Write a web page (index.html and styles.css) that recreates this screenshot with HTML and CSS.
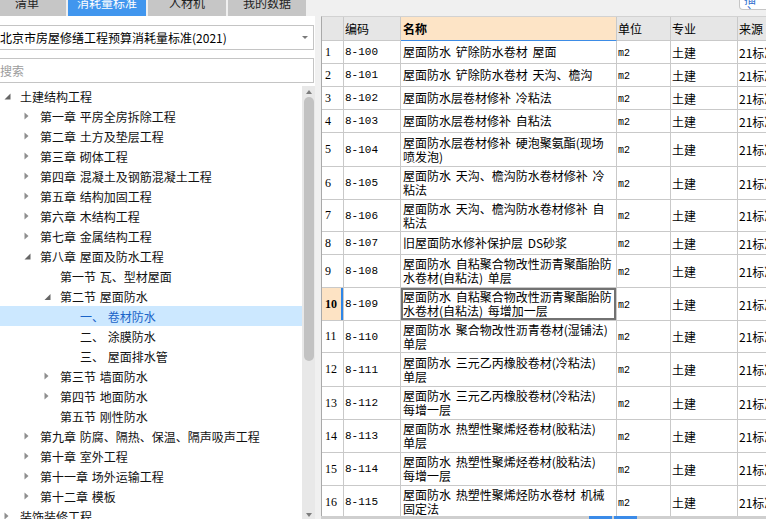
FILE: index.html
```html
<!DOCTYPE html>
<html lang="zh">
<head>
<meta charset="utf-8">
<title>消耗量标准</title>
<link rel="stylesheet" href="styles.css">
</head>
<body>
<div class="app">
  <aside class="left">
    <nav class="tabs">
      <div class="tab"><span>清单</span></div>
      <div class="tab active"><span>消耗量标准</span></div>
      <div class="tab"><span>人材机</span></div>
      <div class="tab"><span>我的数据</span></div>
    </nav>
    <div class="select"><span>北京市房屋修缮工程预算消耗量标准(2021)</span><i class="caret"></i></div>
    <div class="search">搜索</div>
    <div class="treewrap">
      <div class="tree">
        <div class="node l0"><svg class="tog" viewBox="0 0 20 20"><path d="M10.5 7.5 L10.5 13.5 L4.5 13.5 Z" fill="#666"/></svg>土建结构工程</div>
        <div class="node l1"><svg class="tog" viewBox="0 0 20 20"><path d="M4.5 6.5 L8.5 10 L4.5 13.5 Z" fill="#8e8e8e"/></svg>第一章 平房全房拆除工程</div>
        <div class="node l1"><svg class="tog" viewBox="0 0 20 20"><path d="M4.5 6.5 L8.5 10 L4.5 13.5 Z" fill="#8e8e8e"/></svg>第二章 土方及垫层工程</div>
        <div class="node l1"><svg class="tog" viewBox="0 0 20 20"><path d="M4.5 6.5 L8.5 10 L4.5 13.5 Z" fill="#8e8e8e"/></svg>第三章 砌体工程</div>
        <div class="node l1"><svg class="tog" viewBox="0 0 20 20"><path d="M4.5 6.5 L8.5 10 L4.5 13.5 Z" fill="#8e8e8e"/></svg>第四章 混凝土及钢筋混凝土工程</div>
        <div class="node l1"><svg class="tog" viewBox="0 0 20 20"><path d="M4.5 6.5 L8.5 10 L4.5 13.5 Z" fill="#8e8e8e"/></svg>第五章 结构加固工程</div>
        <div class="node l1"><svg class="tog" viewBox="0 0 20 20"><path d="M4.5 6.5 L8.5 10 L4.5 13.5 Z" fill="#8e8e8e"/></svg>第六章 木结构工程</div>
        <div class="node l1"><svg class="tog" viewBox="0 0 20 20"><path d="M4.5 6.5 L8.5 10 L4.5 13.5 Z" fill="#8e8e8e"/></svg>第七章 金属结构工程</div>
        <div class="node l1"><svg class="tog" viewBox="0 0 20 20"><path d="M10.5 7.5 L10.5 13.5 L4.5 13.5 Z" fill="#666"/></svg>第八章 屋面及防水工程</div>
        <div class="node l2"><span class="tog"></span>第一节 瓦、型材屋面</div>
        <div class="node l2"><svg class="tog" viewBox="0 0 20 20"><path d="M10.5 8 L10.5 14 L4.5 14 Z" fill="#666"/></svg>第二节 屋面防水</div>
        <div class="node l3 sel"><span class="tog"></span>一、 卷材防水</div>
        <div class="node l3"><span class="tog"></span>二、 涂膜防水</div>
        <div class="node l3"><span class="tog"></span>三、 屋面排水管</div>
        <div class="node l2"><svg class="tog" viewBox="0 0 20 20"><path d="M4.5 6.5 L8.5 10 L4.5 13.5 Z" fill="#8e8e8e"/></svg>第三节 墙面防水</div>
        <div class="node l2"><svg class="tog" viewBox="0 0 20 20"><path d="M4.5 6.5 L8.5 10 L4.5 13.5 Z" fill="#8e8e8e"/></svg>第四节 地面防水</div>
        <div class="node l2"><span class="tog"></span>第五节 刚性防水</div>
        <div class="node l1"><svg class="tog" viewBox="0 0 20 20"><path d="M4.5 6.5 L8.5 10 L4.5 13.5 Z" fill="#8e8e8e"/></svg>第九章 防腐、隔热、保温、隔声吸声工程</div>
        <div class="node l1"><svg class="tog" viewBox="0 0 20 20"><path d="M4.5 6.5 L8.5 10 L4.5 13.5 Z" fill="#8e8e8e"/></svg>第十章 室外工程</div>
        <div class="node l1"><svg class="tog" viewBox="0 0 20 20"><path d="M4.5 6.5 L8.5 10 L4.5 13.5 Z" fill="#8e8e8e"/></svg>第十一章 场外运输工程</div>
        <div class="node l1"><svg class="tog" viewBox="0 0 20 20"><path d="M4.5 6.5 L8.5 10 L4.5 13.5 Z" fill="#8e8e8e"/></svg>第十二章 模板</div>
        <div class="node l0"><svg class="tog" viewBox="0 0 20 20"><path d="M4.5 6.5 L8.5 10 L4.5 13.5 Z" fill="#8e8e8e"/></svg>装饰装修工程</div>
      </div>
      <div class="vscroll">
        <i class="arr-up"></i>
        <div class="thumb"></div>
        <div class="spacer"></div>
        <i class="arr-down"></i>
      </div>
    </div>
  </aside>
  <div class="splitter"></div>
  <main class="right">
    <div class="topbar"><div class="btn"><span>插入</span></div></div>
    <div class="grid">
      <div class="row head">
        <div class="c rn"></div>
        <div class="c">编码</div>
        <div class="c name-h">名称</div>
        <div class="c">单位</div>
        <div class="c">专业</div>
        <div class="c">来源</div>
      </div>
      <div class="row h23"><div class="c rn">1</div><div class="c code">8-100</div><div class="c nm">屋面防水 铲除防水卷材 屋面</div><div class="c unit">m2</div><div class="c mj">土建</div><div class="c src">21标准</div></div>
      <div class="row h23"><div class="c rn">2</div><div class="c code">8-101</div><div class="c nm">屋面防水 铲除防水卷材 天沟、檐沟</div><div class="c unit">m2</div><div class="c mj">土建</div><div class="c src">21标准</div></div>
      <div class="row h23"><div class="c rn">3</div><div class="c code">8-102</div><div class="c nm">屋面防水层卷材修补 冷粘法</div><div class="c unit">m2</div><div class="c mj">土建</div><div class="c src">21标准</div></div>
      <div class="row h23"><div class="c rn">4</div><div class="c code">8-103</div><div class="c nm">屋面防水层卷材修补 自粘法</div><div class="c unit">m2</div><div class="c mj">土建</div><div class="c src">21标准</div></div>
      <div class="row h34"><div class="c rn">5</div><div class="c code">8-104</div><div class="c nm">屋面防水层卷材修补 硬泡聚氨酯(现场<br>喷发泡)</div><div class="c unit">m2</div><div class="c mj">土建</div><div class="c src">21标准</div></div>
      <div class="row h33"><div class="c rn">6</div><div class="c code">8-105</div><div class="c nm">屋面防水 天沟、檐沟防水卷材修补 冷<br>粘法</div><div class="c unit">m2</div><div class="c mj">土建</div><div class="c src">21标准</div></div>
      <div class="row h32"><div class="c rn">7</div><div class="c code">8-106</div><div class="c nm">屋面防水 天沟、檐沟防水卷材修补 自<br>粘法</div><div class="c unit">m2</div><div class="c mj">土建</div><div class="c src">21标准</div></div>
      <div class="row h23"><div class="c rn">8</div><div class="c code">8-107</div><div class="c nm">旧屋面防水修补保护层 DS砂浆</div><div class="c unit">m2</div><div class="c mj">土建</div><div class="c src">21标准</div></div>
      <div class="row h33"><div class="c rn">9</div><div class="c code">8-108</div><div class="c nm">屋面防水 自粘聚合物改性沥青聚酯胎防<br>水卷材(自粘法) 单层</div><div class="c unit">m2</div><div class="c mj">土建</div><div class="c src">21标准</div></div>
      <div class="row h33"><div class="c rn cur">10</div><div class="c code">8-109</div><div class="c nm focus">屋面防水 自粘聚合物改性沥青聚酯胎防<br>水卷材(自粘法) 每增加一层</div><div class="c unit">m2</div><div class="c mj">土建</div><div class="c src">21标准</div></div>
      <div class="row h32"><div class="c rn">11</div><div class="c code">8-110</div><div class="c nm">屋面防水 聚合物改性沥青卷材(湿铺法)<br>单层</div><div class="c unit">m2</div><div class="c mj">土建</div><div class="c src">21标准</div></div>
      <div class="row h34"><div class="c rn">12</div><div class="c code">8-111</div><div class="c nm">屋面防水 三元乙丙橡胶卷材(冷粘法)<br>单层</div><div class="c unit">m2</div><div class="c mj">土建</div><div class="c src">21标准</div></div>
      <div class="row h33"><div class="c rn">13</div><div class="c code">8-112</div><div class="c nm">屋面防水 三元乙丙橡胶卷材(冷粘法)<br>每增一层</div><div class="c unit">m2</div><div class="c mj">土建</div><div class="c src">21标准</div></div>
      <div class="row h33"><div class="c rn">14</div><div class="c code">8-113</div><div class="c nm">屋面防水 热塑性聚烯烃卷材(胶粘法)<br>单层</div><div class="c unit">m2</div><div class="c mj">土建</div><div class="c src">21标准</div></div>
      <div class="row h33"><div class="c rn">15</div><div class="c code">8-114</div><div class="c nm">屋面防水 热塑性聚烯烃卷材(胶粘法)<br>每增一层</div><div class="c unit">m2</div><div class="c mj">土建</div><div class="c src">21标准</div></div>
      <div class="row h33"><div class="c rn">16</div><div class="c code">8-115</div><div class="c nm">屋面防水 热塑性聚烯烃防水卷材 机械<br>固定法</div><div class="c unit">m2</div><div class="c mj">土建</div><div class="c src">21标准</div></div>
    </div>
    <div class="hscroll"><span class="hs-gap"></span><span class="hs-thumb"></span><span class="hs-sep"></span><span class="hs-thumb"></span></div>
  </main>
</div>
</body>
</html>
```

FILE: styles.css
```css
* { box-sizing: border-box; }
html, body { margin: 0; padding: 0; }
body {
  width: 766px;
  height: 519px;
  overflow: hidden;
  background: #f0f0f0;
  font-family: "Noto Sans CJK SC", "Noto Sans", sans-serif;
  font-size: 12px;
  color: #000;
}
.app { display: flex; height: 519px; }

/* ---------- left panel ---------- */
.left {
  width: 315px;
  flex: none;
  display: flex;
  flex-direction: column;
  background: #fff;
}
.tabs {
  height: 16px;
  flex: none;
  display: flex;
  gap: 2px;
  margin-left: -12px;
  background: #f0f0f0;
  overflow: hidden;
}
.tab {
  width: 78px;
  height: 16px;
  flex: none;
  background: #c6c6c6;
  color: #222;
  display: flex;
  justify-content: center;
  align-items: flex-start;
  line-height: 12px;
}
.tab span { margin-top: -3px; }
.tab.active { background: #4196ee; color: #fff; }

.select {
  margin: 9px 1px 0 -4px;
  height: 25px;
  flex: none;
  border: 1px solid #c4c4c4;
  display: flex;
  align-items: center;
  justify-content: space-between;
  padding: 0 5px 0 3px;
  white-space: nowrap;
}
.caret {
  width: 0;
  height: 0;
  border-left: 3px solid transparent;
  border-right: 3px solid transparent;
  border-top: 3px solid #7a7a7a;
}
.search {
  margin: 8px 1px 0 -4px;
  height: 25px;
  flex: none;
  border: 1px solid #c4c4c4;
  padding-left: 3px;
  color: #9c9c9c;
  display: flex;
  align-items: center;
}
.treewrap {
  margin-top: 3px;
  flex: 1;
  min-height: 0;
  display: flex;
}
.tree {
  flex: 1;
  padding-top: 0;
  overflow: hidden;
}
.node {
  height: 20px;
  display: flex;
  align-items: center;
  white-space: nowrap;
  word-spacing: 1px;
  color: #111;
}
.node.l1 { padding-left: 20px; }
.node.l2 { padding-left: 40px; }
.node.l3 { padding-left: 60px; }
.node.sel { background: #cce8ff; color: #1a64c8; }
.tog { width: 20px; height: 20px; flex: none; display: block; }

.vscroll {
  width: 13px;
  flex: none;
  background: #e8e8e8;
  display: flex;
  flex-direction: column;
  align-items: center;
}
.arr-up {
  margin-top: 4px;
  width: 0; height: 0;
  border-left: 3px solid transparent;
  border-right: 3px solid transparent;
  border-bottom: 4px solid #7d7d7d;
}
.thumb {
  margin-top: 3px;
  width: 10px;
  height: 264px;
  border-radius: 5px;
  background: #c2c2c2;
}
.spacer { flex: 1; }
.arr-down {
  margin-bottom: 2px;
  width: 0; height: 0;
  border-left: 3px solid transparent;
  border-right: 3px solid transparent;
  border-top: 4px solid #7d7d7d;
}

.splitter { width: 6px; flex: none; background: #f0f0f0; }

/* ---------- right: grid ---------- */
.right {
  flex: 1;
  min-width: 0;
  display: flex;
  flex-direction: column;
}
.topbar {
  height: 16px;
  flex: none;
  display: flex;
  justify-content: flex-end;
  align-items: flex-start;
}
.btn {
  width: 28px;
  height: 10px;
  margin-right: -1px;
  background: #fff;
  border: 1px solid #c6c6c6;
  border-top: none;
  border-radius: 0 0 0 4px;
  overflow: hidden;
  padding-left: 4px;
  color: #2f6fcf;
  line-height: 12px;
}
.btn span { display: block; margin-top: -7px; }

.grid {
  flex: 1;
  min-height: 0;
  overflow: hidden;
  background: #fff;
  border-left: 1px solid #a9a9a9;
  border-top: 1px solid #d2d2d2;
}
.row {
  display: grid;
  grid-template-columns: 22px 57px 216px 54px 67px 80px;
  width: 496px;
}
.row.head { height: 24px; }
.row.h23 { height: 23px; }
.row.h32 { height: 32px; }
.row.h33 { height: 33px; }
.row.h34 { height: 34px; }

.c {
  border-right: 1px solid #c9c9c9;
  border-bottom: 1px solid #c9c9c9;
  display: flex;
  align-items: center;
  padding-left: 1px;
  white-space: nowrap;
  overflow: hidden;
}
.head .c { background: #e6e6e6; }
.head .name-h {
  background: #fde4c6;
  font-weight: bold;
  padding-left: 2px;
  border-bottom-color: #3d8ce6;
}
.rn {
  padding-left: 3px;
  font-family: "Liberation Serif", serif;
  font-size: 12px;
}
.rn.cur {
  background: #fde3c4;
  font-weight: bold;
  box-shadow: inset -2px 0 0 #2e86e8;
}
.code {
  font-family: "Liberation Mono", monospace;
  font-size: 11px;
}
.nm {
  padding-left: 2px;
  line-height: 14px;
  word-spacing: 2px;
}
.nm.focus { box-shadow: inset 0 0 0 2px #727272; }
.unit {
  font-family: "Liberation Mono", monospace;
  font-size: 10px;
  padding-top: 2px;
}
.mj, .src { font-size: 12px; }

.hscroll {
  height: 3px;
  flex: none;
  background: #cfcfcf;
  display: flex;
}
.hs-gap { width: 268px; flex: none; }
.hs-thumb { width: 23px; flex: none; background: #3b8be8; }
.hs-sep { width: 2px; flex: none; }
```
